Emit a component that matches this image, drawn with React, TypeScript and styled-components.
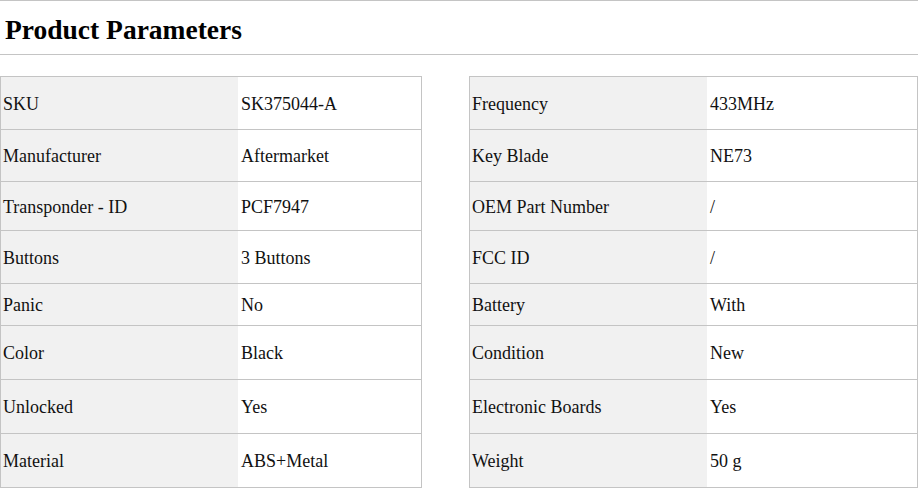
import React from "react";
import styled, { createGlobalStyle } from "styled-components";

const Global = createGlobalStyle`
  html, body { margin: 0; padding: 0; background: #fff; }
  body { font-family: "Liberation Serif", "Times New Roman", serif; color: #111; }
`;

const Page = styled.div`
  width: 918px;
`;

const Header = styled.div`
  height: 55px;
  box-sizing: border-box;
  border-top: 1px solid #c4c4c4;
  border-bottom: 1px solid #c4c4c4;
  display: flex;
  align-items: center;
  padding-left: 5px;
`;

const Title = styled.h2`
  margin: 0;
  font-size: 27.5px;
  font-weight: bold;
  color: #000;
  line-height: 1;
  padding-top: 5px;
`;

const Tables = styled.div`
  margin-top: 21px;
  display: flex;
  gap: 47px;
`;

const Table = styled.div<{ $w: number }>`
  width: ${(p) => p.$w}px;
  box-sizing: border-box;
  border-left: 1px solid #c4c4c4;
  border-right: 1px solid #c4c4c4;
  border-bottom: 1px solid #c4c4c4;
  display: flex;
  flex-direction: column;
`;

const Row = styled.div<{ $h: number }>`
  height: ${(p) => p.$h}px;
  box-sizing: border-box;
  border-top: 1px solid #c4c4c4;
  display: grid;
  grid-template-columns: 237px 1fr;
`;

const Key = styled.div`
  background: #f1f1f1;
  display: flex;
  align-items: center;
  padding-left: 2px;
  padding-top: 2px;
  font-size: 18px;
`;

const Value = styled.div`
  display: flex;
  align-items: center;
  padding-left: 3px;
  padding-top: 2px;
  font-size: 18px;
`;

const heights = [53, 52, 49, 53, 42, 54, 54, 54];

const left: [string, string][] = [
  ["SKU", "SK375044-A"],
  ["Manufacturer", "Aftermarket"],
  ["Transponder - ID", "PCF7947"],
  ["Buttons", "3 Buttons"],
  ["Panic", "No"],
  ["Color", "Black"],
  ["Unlocked", "Yes"],
  ["Material", "ABS+Metal"],
];

const right: [string, string][] = [
  ["Frequency", "433MHz"],
  ["Key Blade", "NE73"],
  ["OEM Part Number", "/"],
  ["FCC ID", "/"],
  ["Battery", "With"],
  ["Condition", "New"],
  ["Electronic Boards", "Yes"],
  ["Weight", "50 g"],
];

function ParamTable({ rows, width }: { rows: [string, string][]; width: number }) {
  return (
    <Table $w={width}>
      {rows.map(([k, v], i) => (
        <Row key={k} $h={heights[i]}>
          <Key>{k}</Key>
          <Value>{v}</Value>
        </Row>
      ))}
    </Table>
  );
}

export default function App() {
  return (
    <Page>
      <Global />
      <Header>
        <Title>Product Parameters</Title>
      </Header>
      <Tables>
        <ParamTable rows={left} width={422} />
        <ParamTable rows={right} width={449} />
      </Tables>
    </Page>
  );
}
